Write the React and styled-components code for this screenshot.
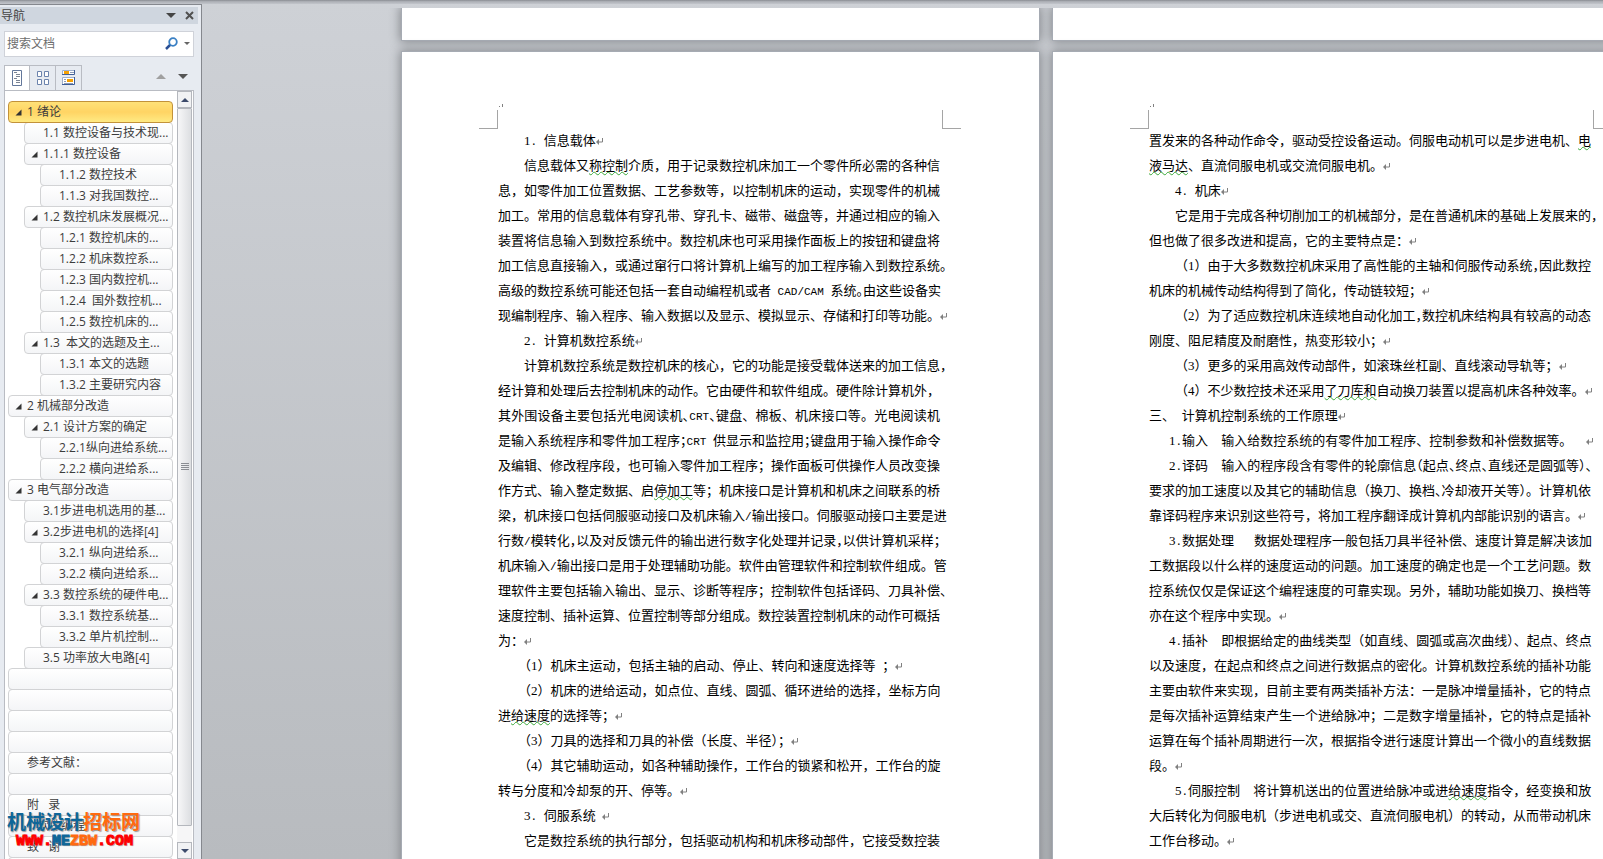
import React from 'react'
import styled, { createGlobalStyle, css } from 'styled-components'

const GlobalStyle = createGlobalStyle`
    * {
        box-sizing: border-box;
    }
    body {
        margin: 0;
        font-family: "Open Sans", "Noto Sans CJK SC", sans-serif;
        font-size: 12px;
        color: #444;
    }
    button {
        padding: 0;
        border: 0;
        background: none;
        display: flex;
        align-items: center;
        justify-content: center;
    }
`

const Window = styled.div`
    display: flex;
    flex-direction: column;
    height: 100vh;
    overflow: hidden;
    background: linear-gradient(#ced1d6, #b8bbbf);
`

const TopEdge = styled.div`
    flex: none;
    height: 4px;
    background: linear-gradient(#898c92, #adb0b6 40%, #c2c5cb);
`

const Workspace = styled.div`
    flex: 1;
    display: flex;
    min-height: 0;
`

/* navigation pane */

const Pane = styled.aside`
    position: relative;
    flex: none;
    display: flex;
    flex-direction: column;
    width: 202px;
    padding: 2px 3px 0 0;
    background: #e7ebf1;
    border-top: 1px solid #85888e;
    border-right: 1px solid #85888e;
`

const PaneHeader = styled.header`
    flex: none;
    display: flex;
    align-items: center;
    height: 17px;
    background: #cfd6df;
`

const PaneTitle = styled.h2`
    flex: 1;
    margin: 0;
    padding-left: 1px;
    font-size: 12px;
    font-weight: 400;
    line-height: 17px;
`

const HeaderButton = styled.button`
    width: 18px;
    height: 17px;
`

const SearchBox = styled.form`
    flex: none;
    display: flex;
    align-items: center;
    height: 26px;
    margin: 7px 4px 0;
    background: #fff;
    border: 1px solid #cfd2d9;
`

const SearchInput = styled.input`
    flex: 1;
    min-width: 0;
    padding: 0 0 2px 2px;
    border: 0;
    outline: 0;
    background: none;
    font: inherit;

    &::placeholder {
        color: #6d6d6d;
        opacity: 1;
    }
`

const SearchButton = styled.button`
    width: ${props => props.$width}px;
    height: 22px;
    padding-bottom: 2px;
`

const TabBar = styled.div`
    flex: none;
    display: flex;
    align-items: center;
    height: 26px;
    margin: 8px 4px 0;
`

const Tab = styled.button`
    width: 26px;
    height: 26px;
    && {
        border: 1px solid #b9bcc3;
        border-left-width: ${props => (props.$first ? 1 : 0)}px;
        border-bottom-color: ${props => (props.$active ? '#fff' : '#b9bcc3')};
        background: ${props => (props.$active ? '#fff' : 'none')};
    }
`

const Spacer = styled.div`
    flex: 1;
`

const StepButton = styled.button`
    width: 22px;
    height: 26px;
    padding-bottom: 4px;
`

const ListBox = styled.div`
    flex: 1;
    display: flex;
    min-height: 0;
    margin: -1px 4px 0;
    background: #fff;
    border: 1px solid #b9bcc3;
    border-bottom: 0;
`

const Outline = styled.ul`
    flex: 1;
    min-width: 0;
    margin: 0;
    padding: 10px 4px 0 3px;
    list-style: none;
    overflow: hidden;
`

const Entry = styled.li`
    height: 21px;
    padding-left: ${props => props.$level * 16}px;
`

const EntryLink = styled.a`
    display: flex;
    align-items: center;
    height: 22px;
    color: #3c3c3c;
    line-height: 20px;
    white-space: pre;
    overflow: hidden;
    text-decoration: none;
    border: 1px solid #d2d3d5;
    border-radius: 4px;
    background: linear-gradient(#fff, #f4f5f7);
    ${props => props.$current && css`
        position: relative;
        border-color: #c2923a;
        background: linear-gradient(#ffe178, #ffd464 50%, #ffea83);
    `}
`

const Twisty = styled.span`
    flex: none;
    display: flex;
    justify-content: center;
    width: 18px;
`

const ScrollBar = styled.div`
    flex: none;
    display: flex;
    flex-direction: column;
    width: 15px;
    margin-right: 1px;
    background: #f6f6f7;
`

const ScrollButton = styled.button`
    flex: none;
    height: 17px;
    && {
        border: 1px solid #b4b7bd;
        background: #f1f2f4;
    }
`

const Thumb = styled.div`
    flex: 1;
    display: flex;
    align-items: center;
    justify-content: center;
    margin-bottom: 16px;
    border: 1px solid #b4b7bd;
    border-radius: 1px;
    background: linear-gradient(90deg, #f7f7f8, #dcdee1);
`

const Watermark = styled.div`
    position: absolute;
    left: 7px;
    bottom: 9px;
    font-family: "Noto Sans CJK SC", sans-serif;
    font-size: 19px;
    font-weight: 700;
    line-height: 24px;
    color: ${props => props.color};
    text-shadow: 1px 1px 1px #999;
    white-space: nowrap;
`

const WatermarkUrl = styled.div`
    padding-left: 9px;
    font-family: "Liberation Mono", monospace;
    font-size: 15px;
    line-height: 17px;
    -webkit-text-stroke: 1px;
`

const Tint = styled.span`
    color: ${props => props.color};
`

/* document area */

const Canvas = styled.main`
    flex: 1;
    min-width: 0;
    padding: 4px 0 0 180px;
    overflow: hidden;
`

const PageGrid = styled.div`
    display: grid;
    grid-template-columns: repeat(2, 637px);
    grid-template-rows: 32px auto;
    gap: 12px 14px;
    height: 100%;
    overflow: hidden;
    padding-left: 20px;
`

const Page = styled.article`
    min-height: 840px;
    padding: 58px 78px 0 77px;
    background: #fff;
    box-shadow: 0 0 0 1px #a6abb3, 0 0 10px 2px #85888d;
`

const PageTail = styled.div`
    background: #fff;
    box-shadow: 0 0 0 1px #a6abb3, 0 0 10px 2px #85888d;
`

const MarginMarks = styled.div`
    position: relative;
    display: flex;
    justify-content: space-between;
    height: 19px;
`

const Corner = styled.span`
    width: 19px;
    border: solid #a5a5a5;
    border-width: ${props => (props.$side === 'left' ? '0 1px 1px 0' : '0 0 1px 1px')};
`

const HeaderMark = styled.svg`
    position: absolute;
    left: 20px;
    top: -6px;
`

const Body = styled.div`
    margin-top: -2px;
    padding: 0 21px 0 19px;
    color: #000;
    font-family: "Noto Sans CJK SC", sans-serif;
    font-size: 13px;
    line-height: 25px;
`

const Paragraph = styled.p`
    margin: 0;
    text-indent: ${props => props.$indent}px;
`

const Line = styled.span`
    display: block;
    height: 25px;
    white-space: nowrap;

    & + & {
        text-indent: 0;
    }
    ${props => props.$full && css`
        text-align-last: justify;
    `}
`

const Half = styled.span`
    font-feature-settings: "halt";
`

const Latin = styled.span`
    font-family: "Liberation Mono", monospace;
    font-size: 11px;
`

const Digits = styled.span`
    font-family: "Liberation Serif", serif;
`

const Grammar = styled.span`
    text-decoration: underline wavy #3aa83a 1px;
    text-decoration-skip-ink: none;
    text-underline-offset: 1px;
`

const outline = [
    [0, '1 绪论', true],
    [1, '1.1 数控设备与技术现...'],
    [1, '1.1.1 数控设备', true],
    [2, '1.1.2 数控技术'],
    [2, '1.1.3 对我国数控...'],
    [1, '1.2 数控机床发展概况...', true],
    [2, '1.2.1 数控机床的...'],
    [2, '1.2.2 机床数控系...'],
    [2, '1.2.3 国内数控机...'],
    [2, '1.2.4  国外数控机...'],
    [2, '1.2.5 数控机床的...'],
    [1, '1.3  本文的选题及主...', true],
    [2, '1.3.1 本文的选题'],
    [2, '1.3.2 主要研究内容'],
    [0, '2 机械部分改造', true],
    [1, '2.1 设计方案的确定', true],
    [2, '2.2.1纵向进给系统...'],
    [2, '2.2.2 横向进给系...'],
    [0, '3 电气部分改造', true],
    [1, '3.1步进电机选用的基...'],
    [1, '3.2步进电机的选择[4]', true],
    [2, '3.2.1 纵向进给系...'],
    [2, '3.2.2 横向进给系...'],
    [1, '3.3 数控系统的硬件电...', true],
    [2, '3.3.1 数控系统基...'],
    [2, '3.3.2 单片机控制...'],
    [1, '3.5 功率放大电路[4]'],
    [0, ''],
    [0, ''],
    [0, ''],
    [0, ''],
    [0, '参考文献：'],
    [0, ''],
    [0, '附   录'],
    [0, '1 软件编程'],
    [0, '致   谢'],
    [0, ''],
]

// {..} marks a grammar squiggle, ^ sets the next punctuation mark half width
const leftPage = [
    { indent: 26, lines: ['1. 信息载体'] },
    {
        indent: 26,
        lines: [
            '信息载体又{称控制}介质，用于记录数控机床加工一个零件所必需的各种信',
            '息，如零件加工位置数据、工艺参数等，以控制机床的运动，实现零件的机械',
            '加工。常用的信息载体有穿孔带、穿孔卡、磁带、磁盘等，并通过相应的输入',
            '装置将信息输入到数控系统中。数控机床也可采用操作面板上的按钮和键盘将',
            '加工信息直接输入，或通过窜行口将计算机上编写的加工程序输入到数控系统。',
            '高级的数控系统可能还包括一套自动编程机或者 CAD/CAM 系统^。由这些设备实',
            '现编制程序、输入程序、输入数据以及显示、模拟显示、存储和打印等功能。',
        ],
    },
    { indent: 26, lines: ['2. 计算机数控系统'] },
    {
        indent: 26,
        lines: [
            '计算机数控系统是数控机床的核心，它的功能是接受载体送来的加工信息，',
            '经计算和处理后去控制机床的动作。它由硬件和软件组成。硬件除计算机外，',
            '其外围设备主要包括光电阅读机^、CRT^、键盘、棉板、机床接口等。光电阅读机',
            '是输入系统程序和零件加工程序^；CRT 供显示和监控用^；键盘用于输入操作命令',
            '及编辑、修改程序段，也可输入零件加工程序；操作面板可供操作人员改变操',
            '作方式、输入整定数据、启{停加工}等；机床接口是计算机和机床之间联系的桥',
            '梁，机床接口包括伺服驱动接口及机床输入/输出接口。伺服驱动接口主要是进',
            '行数/模转化^，以及对反馈元件的输出进行数字化处理并记录^，以供计算机采样^；',
            '机床输入/输出接口是用于处理辅助功能。软件由管理软件和控制软件组成。管',
            '理软件主要包括输入输出、显示、诊断等程序；控制软件包括译码、刀具补偿、',
            '速度控制、插补运算、位置控制等部分组成。数控装置控制机床的动作可概括',
            '为：',
        ],
    },
    { indent: 20, lines: ['（1）机床主运动，包括主轴的启动、停止、转向和速度选择等 ；'] },
    {
        indent: 20,
        lines: [
            '（2）机床的进给运动，如点位、直线、圆弧、循环进给的选择，坐标方向',
            '进{给速度}的选择等；',
        ],
    },
    { indent: 20, lines: ['（3）刀具的选择和刀具的补偿（长度、半径）；'] },
    {
        indent: 20,
        lines: [
            '（4）其它辅助运动，如各种辅助操作，工作台的锁紧和松开，工作台的旋',
            '转与分度和冷却泵的开、停等。',
        ],
    },
    { indent: 26, lines: ['3. 伺服系统 '] },
    { indent: 26, open: true, lines: ['它是数控系统的执行部分，包括驱动机构和机床移动部件，它接受数控装'] },
]

const rightPage = [
    {
        indent: 0,
        lines: [
            '置发来的各种动作命令，驱动受控设备运动。伺服电动机可以是步进电机、{电}',
            '{液马达}、直流伺服电机或交流伺服电机。',
        ],
    },
    { indent: 26, lines: ['4. 机床'] },
    {
        indent: 26,
        lines: [
            '它是用于完成各种切削加工的机械部分，是在普通机床的基础上发展来的，',
            '但也做了很多改进和提高，它的主要特点是：',
        ],
    },
    {
        indent: 26,
        lines: [
            '（1）由于大多数数控机床采用了高性能的主轴和伺服传动系统^，因此数控',
            '机床的机械传动结构得到了简化，传动链较短；',
        ],
    },
    {
        indent: 26,
        lines: [
            '（2）为了适应数控机床连续地自动化加工^，数控机床结构具有较高的动态',
            '刚度、阻尼精度及耐磨性，热变形较小；',
        ],
    },
    { indent: 26, lines: ['（3）更多的采用高效传动部件，如滚珠丝杠副、直线滚动导轨等；'] },
    { indent: 26, lines: ['（4）不少数控技术还采用{了刀库和}自动换刀装置以提高机床各种效率。'] },
    { indent: 0, lines: ['三、 计算机控制系统的工作原理'] },
    { indent: 20, lines: ['1.输入  输入给数控系统的有零件加工程序、控制参数和补偿数据等。  '] },
    {
        indent: 20,
        lines: [
            '2.译码  输入的程序段含有零件的轮廓信息^（起点^、终点^、直线还是圆弧等^）^、',
            '要求的加工速度以及其它的辅助信息（换刀、换档^、冷却液开关等）。计算机依',
            '靠译码程序来识别这些符号，将加工程序翻译成计算机内部能识别的语言。',
        ],
    },
    {
        indent: 20,
        lines: [
            '3.数据处理   数据处理程序一般包括刀具半径补偿、速度计算是解决该加',
            '工数据段以什么样的速度运动的问题。加工速度的确定也是一个工艺问题。数',
            '控系统仅仅是保证这个编程速度的可靠实现。另外，辅助功能如换刀、换档等',
            '亦在这个程序中实现。',
        ],
    },
    {
        indent: 20,
        lines: [
            '4.插补  即根据给定的曲线类型（如直线、圆弧或高次曲线）、起点、终点',
            '以及速度，在起点和终点之间进行数据点的密化。计算机数控系统的插补功能',
            '主要由软件来实现，目前主要有两类插补方法：一是脉冲增量插补，它的特点',
            '是每次插补运算结束产生一个进给脉冲；二是数字增量插补，它的特点是插补',
            '运算在每个插补周期进行一次，根据指令进行速度计算出一个微小的直线数据',
            '段。',
        ],
    },
    {
        indent: 26,
        lines: [
            '5.伺服控制  将计算机送出的位置进给脉冲或进{给速度}指令，经变换和放',
            '大后转化为伺服电机（步进电机或交、直流伺服电机）的转动，从而带动机床',
            '工作台移动。',
        ],
    },
]

const Triangle = ({ up, size = 10, fill = '#444' }) => (
    <svg width={size} height={size / 2} viewBox="0 0 10 5" aria-hidden="true">
        <path d={up ? 'M0 5L5 0L10 5Z' : 'M0 0H10L5 5Z'} fill={fill} />
    </svg>
)

const ReturnMark = () => (
    <svg width="8" height="8" viewBox="0 0 8 8" aria-hidden="true">
        <path d="M6.500 1V5H2" fill="none" stroke="#808080" />
        <path d="M0 5L3 2V8Z" fill="#808080" />
    </svg>
)

const Magnifier = () => (
    <svg width="13" height="13" viewBox="0 0 13 13" aria-hidden="true">
        <path d="M1 12L5.500 7.500" stroke="#2a4f95" strokeWidth="2.500" />
        <circle cx="8" cy="5" r="3.800" fill="#fff" stroke="#3a80c4" strokeWidth="1.800" />
    </svg>
)

const HeadingsIcon = () => (
    <svg width="10" height="16" viewBox="0 0 10 16" aria-hidden="true">
        <path d="M0.500 0.500h9v15h-9z" fill="#fff" stroke="#63779a" />
        <path d="M2 2.500h3M4 4.500h4M4 6.500h4M2 8.500h3M4 10.500h4M4 12.500h4" stroke="#7b8494" />
    </svg>
)

const PagesIcon = () => (
    <svg width="12" height="14" viewBox="0 0 12 14" aria-hidden="true">
        <path
            d="M0.500 0.500h4v5h-4zM7.500 0.500h4v5h-4zM0.500 8.500h4v5h-4zM7.500 8.500h4v5h-4z"
            fill="#fff"
            stroke="#6b83ad"
        />
    </svg>
)

const ResultsIcon = () => (
    <svg width="14" height="16" viewBox="0 0 14 16" aria-hidden="true">
        <path d="M0.500 0.500h12v4h-12zM0.500 7.500h12v7h-12z" fill="#fff" />
        <path d="M0.500 5V0.500H12M0.500 15V7.500H12" fill="none" stroke="#9fb0cc" />
        <path d="M12.500 0V4.500H0M12.500 7V14.500H0" fill="none" stroke="#3f5f98" />
        <path d="M2 1h5v3H2zM5 9h6v3H5z" fill="#f5a000" />
        <path d="M8 2.500h4M2 9.500h2M2 11.500h2M2 13.500h9" stroke="#8d9bb4" />
    </svg>
)

const renderText = text =>
    text.split(/(\{[^}]+\}|\^.|[0-9]+|[\x20-\x2f\x3a-\x5a]+)/).map((part, i) => {
        if (part[0] === '{') {
            return <Grammar key={i}>{part.slice(1, -1)}</Grammar>
        }
        if (part[0] === '^') {
            return <Half key={i}>{part[1]}</Half>
        }
        if (/^[0-9]/.test(part)) {
            return <Digits key={i}>{part}</Digits>
        }
        if (/^[\x20-\x5a]/.test(part)) {
            return <Latin key={i}>{part.replace(/ /g, '\u00a0')}</Latin>
        }
        return part
    })

const Sheet = ({ paragraphs }) => (
    <Page>
        <MarginMarks>
            <Corner $side="left" />
            <HeaderMark width="6" height="4" viewBox="0 0 6 4" aria-hidden="true">
                <path d="M0 2h1v1h-1zM3 0h1v3h-1z" fill="#808080" />
            </HeaderMark>
            <Corner $side="right" />
        </MarginMarks>
        <Body>
            {paragraphs.map((p, i) => (
                <Paragraph key={i} $indent={p.indent}>
                    {p.lines.map((line, j) => {
                        const last = j === p.lines.length - 1
                        return (
                            <Line key={j} $full={!last || p.open}>
                                {renderText(line)}
                                {last && !p.open && <ReturnMark />}
                            </Line>
                        )
                    })}
                </Paragraph>
            ))}
        </Body>
    </Page>
)

const NavigationPane = () => (
    <Pane aria-label="导航">
        <PaneHeader>
            <PaneTitle>导航</PaneTitle>
            <HeaderButton aria-label="任务窗格选项"><Triangle /></HeaderButton>
            <HeaderButton aria-label="关闭">
                <svg width="9" height="9" viewBox="0 0 9 9" aria-hidden="true">
                    <path d="M1 1L8 8M8 1L1 8" stroke="#505050" strokeWidth="2" />
                </svg>
            </HeaderButton>
        </PaneHeader>
        <SearchBox>
            <SearchInput aria-label="搜索文档" placeholder="搜索文档" />
            <SearchButton type="button" $width={20} aria-label="搜索"><Magnifier /></SearchButton>
            <SearchButton type="button" $width={12} aria-label="查找选项">
                <Triangle size={6} fill="#666" />
            </SearchButton>
        </SearchBox>
        <TabBar>
            <Tab $first $active aria-label="浏览标题"><HeadingsIcon /></Tab>
            <Tab aria-label="浏览页面"><PagesIcon /></Tab>
            <Tab aria-label="浏览结果"><ResultsIcon /></Tab>
            <Spacer />
            <StepButton aria-label="上一标题"><Triangle up fill="#a0a0a0" /></StepButton>
            <StepButton aria-label="下一标题"><Triangle fill="#555" /></StepButton>
        </TabBar>
        <ListBox>
            <Outline>
                {outline.map(([level, title, open], i) => (
                    <Entry key={i} $level={level}>
                        <EntryLink href="#" $current={i === 0}>
                            <Twisty>
                                {open && (
                                    <svg width="7" height="7" viewBox="0 0 7 7" aria-hidden="true">
                                        <path d="M6.500 0.500V6.500H0.500Z" fill="#333" />
                                    </svg>
                                )}
                            </Twisty>
                            {title}
                        </EntryLink>
                    </Entry>
                ))}
            </Outline>
            <ScrollBar>
                <ScrollButton aria-label="向上滚动"><Triangle up size={8} fill="#3c4a6b" /></ScrollButton>
                <Thumb>
                    <svg width="8" height="8" viewBox="0 0 8 8" aria-hidden="true">
                        <path d="M0 0.500h8M0 2.500h8M0 4.500h8M0 6.500h8" stroke="#8a8d93" />
                    </svg>
                </Thumb>
                <ScrollButton aria-label="向下滚动"><Triangle size={8} fill="#3c4a6b" /></ScrollButton>
            </ScrollBar>
        </ListBox>
        <Watermark color="#0e6699">
            机械设计<Tint color="#ff6a10">招标网</Tint>
            <WatermarkUrl>
                <Tint color="#ff0000">WWW.</Tint>ME<Tint color="#ff6a10">ZBW</Tint>
                <Tint color="#ff0000">.COM</Tint>
            </WatermarkUrl>
        </Watermark>
    </Pane>
)

const App = () => {
    return (
        <Window>
            <GlobalStyle />
            <TopEdge />
            <Workspace>
                <NavigationPane />
                <Canvas>
                    <PageGrid>
                        <PageTail />
                        <PageTail />
                        <Sheet paragraphs={leftPage} />
                        <Sheet paragraphs={rightPage} />
                    </PageGrid>
                </Canvas>
            </Workspace>
        </Window>
    )
}

export default App
